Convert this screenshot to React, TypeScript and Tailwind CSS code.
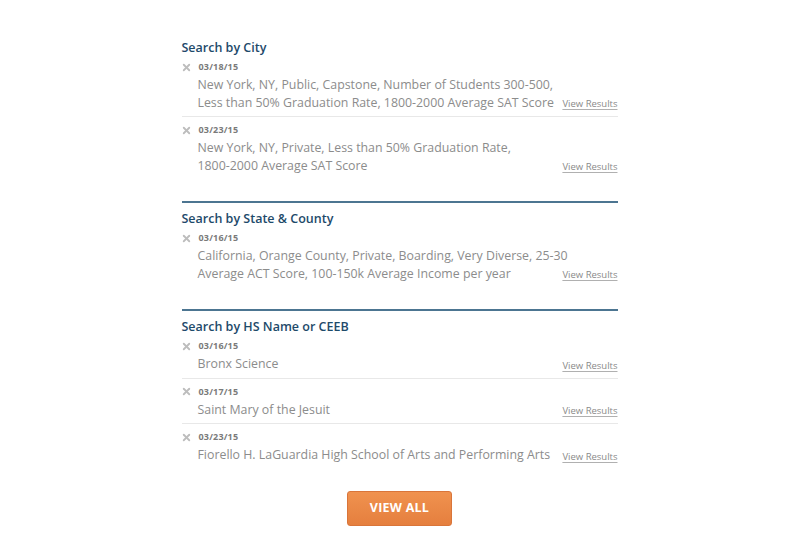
import { X } from "lucide-react";

type Search = { date: string; text: string };
type Section = { title: string; items: Search[] };

const SECTIONS: Section[] = [
  {
    title: "Search by City",
    items: [
      {
        date: "03/18/15",
        text: "New York, NY, Public, Capstone, Number of Students 300-500, Less than 50% Graduation Rate, 1800-2000 Average SAT Score",
      },
      {
        date: "03/23/15",
        text: "New York, NY, Private, Less than 50% Graduation Rate, 1800-2000 Average SAT Score",
      },
    ],
  },
  {
    title: "Search by State & County",
    items: [
      {
        date: "03/16/15",
        text: "California, Orange County, Private, Boarding, Very Diverse, 25-30 Average ACT Score, 100-150k Average Income per year",
      },
    ],
  },
  {
    title: "Search by HS Name or CEEB",
    items: [
      { date: "03/16/15", text: "Bronx Science" },
      { date: "03/17/15", text: "Saint Mary of the Jesuit" },
      { date: "03/23/15", text: "Fiorello H. LaGuardia High School of Arts and Performing Arts" },
    ],
  },
];

// keep ranges like "1800-2000" from breaking at the hyphen
function NoHyphenBreak({ text }: { text: string }) {
  const words = text.split(" ");
  return (
    <>
      {words.map((w, i) => (
        <span key={i}>
          {w.includes("-") ? <span className="whitespace-nowrap">{w}</span> : w}
          {i < words.length - 1 ? " " : ""}
        </span>
      ))}
    </>
  );
}

function SearchRow({ item, first, last }: { item: Search; first: boolean; last: boolean }) {
  return (
    <div
      className={[
        first ? "pt-[4px]" : "pt-[6px]",
        last ? "" : "pb-[5px] border-b border-[#e8e8e8]",
      ].join(" ")}
    >
      <div className="flex items-center gap-[7px] h-[14px]">
        <X className="w-[11px] h-[11px] -ml-[1px] text-[#bdbdbd]" strokeWidth={4} />
        <span className="text-[9px] font-bold text-[#7a7a7a] tracking-[0.02em]">{item.date}</span>
      </div>
      <div className="relative pl-[16px] pt-[2px]">
        <p className="max-w-[374px] text-[12.35px] leading-[17.5px] text-[#8c8c8c]">
          <NoHyphenBreak text={item.text} />
        </p>
        <a className="absolute right-0 bottom-0 text-[9.5px] leading-[14px] text-[#8a8a8a] underline underline-offset-2 decoration-[#b0b0b0]">
          View Results
        </a>
      </div>
    </div>
  );
}

export default function App() {
  return (
    <div
      className="min-h-[542px] w-full bg-white flex justify-center"
      style={{ fontFamily: '"Open Sans", sans-serif' }}
    >
      <div className="w-[436px] pt-[40px]">
        {SECTIONS.map((s, i) => (
          <div
            key={s.title}
            className={i < SECTIONS.length - 1 ? "pb-[27px] mb-[8px] border-b-2 border-[#4c7591]" : ""}
          >
            <h2 className="text-[12.5px] leading-[16px] font-semibold text-[#1e4a6a]">{s.title}</h2>
            {s.items.map((it, j) => (
              <SearchRow
                key={it.date + j}
                item={it}
                first={j === 0}
                last={j === s.items.length - 1}
              />
            ))}
          </div>
        ))}
        <div className="flex justify-center pt-[27px]">
          <button className="w-[105px] h-[35px] rounded-[3px] bg-gradient-to-b from-[#f0924f] to-[#e57f3e] border border-[#d9753a] text-white text-[12.5px] font-bold tracking-[0.02em]">
            VIEW ALL
          </button>
        </div>
      </div>
    </div>
  );
}
